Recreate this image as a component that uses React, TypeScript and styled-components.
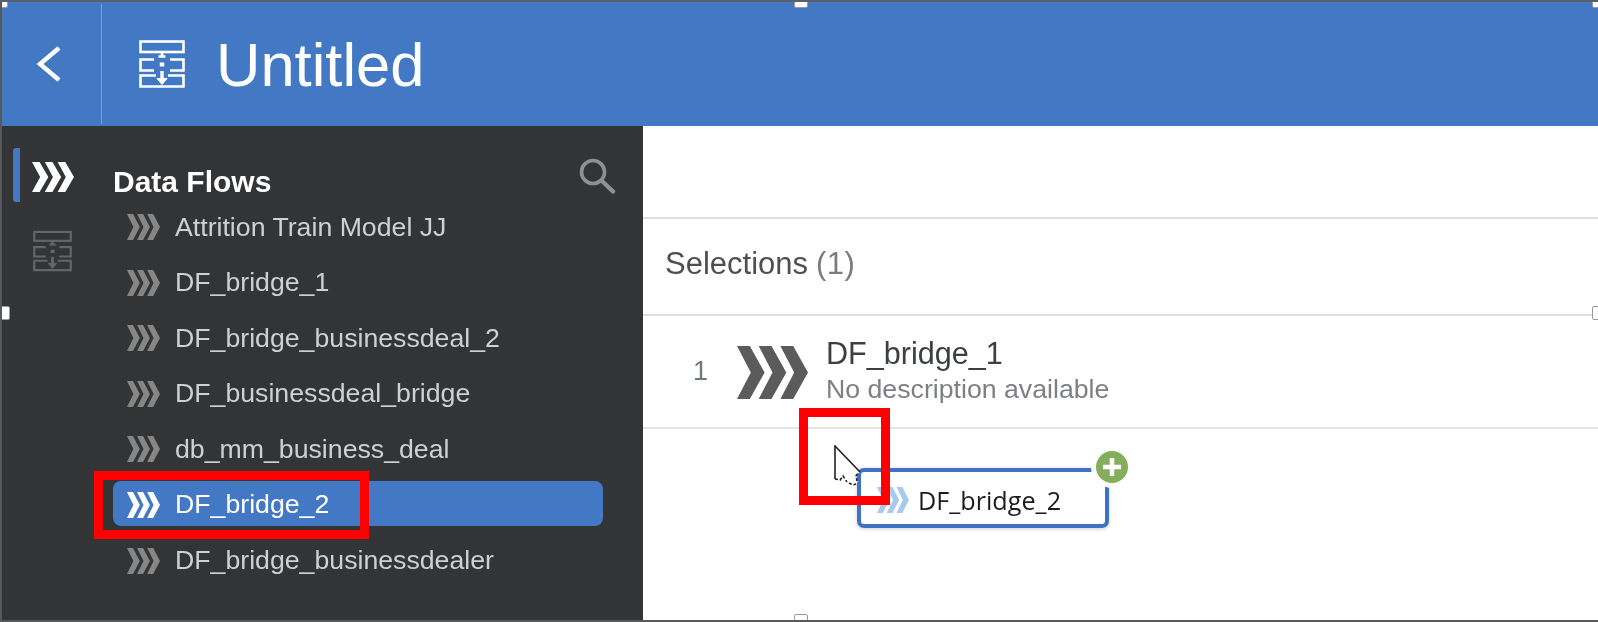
import React from 'react';
import styled, { createGlobalStyle } from 'styled-components';

const flows = [
  'Attrition Train Model JJ',
  'DF_bridge_1',
  'DF_bridge_businessdeal_2',
  'DF_businessdeal_bridge',
  'db_mm_business_deal',
  'DF_bridge_2',
  'DF_bridge_businessdealer',
];

const Chevrons: React.FC<{ className?: string }> = ({ className }) => (
  <svg className={className} viewBox="0 0 72 54" fill="currentColor" preserveAspectRatio="none">
    <polygon points="0,0 13,0 28,27 13,54 0,54 14,27" />
    <polygon points="22,0 35,0 50,27 35,54 22,54 36,27" />
    <polygon points="44,0 57,0 72,27 57,54 44,54 58,27" />
  </svg>
);

const TableIcon: React.FC<{ className?: string }> = ({ className }) => (
  <svg className={className} viewBox="0 0 46 48" fill="none" stroke="currentColor" strokeWidth="2.6">
    <rect x="1.5" y="1.5" width="43" height="10.5" />
    <path d="M23 12v5M19.5 16.5h7" />
    <path d="M15 19.5H1.5v11H15M31 19.5h13.5v11H31" />
    <path d="M23 22.5v4" strokeWidth="4.5" />
    <path d="M17 35.5H1.5v11h43v-11H29" />
    <path d="M23 31v11" strokeWidth="3.4" />
    <path d="M18 38.5l5 6 5-6z" fill="currentColor" strokeWidth="1" />
  </svg>
);

const App: React.FC = () => (
  <>
    <GlobalStyle />
    <Frame>
      <Header>
        <BackButton>
          <svg width="26" height="36" viewBox="0 0 26 36" fill="none" stroke="#fff" strokeWidth="4.4">
            <path d="M23 2 4 18l19 16" />
          </svg>
        </BackButton>
        <TitleArea>
          <HeaderIcon />
          <Title>Untitled</Title>
        </TitleArea>
      </Header>
      <Body>
        <Sidebar>
          <Rail>
            <RailTab $active>
              <RailChevrons />
            </RailTab>
            <RailTable />
          </Rail>
          <FlowPanel>
            <PanelHeader>
              <PanelTitle>Data Flows</PanelTitle>
              <SearchIcon width="38" height="38" viewBox="0 0 38 38" fill="none" stroke="#8d9094">
                <circle cx="15" cy="15" r="11.5" strokeWidth="3.6" />
                <path d="M24 24l11 10.5" strokeWidth="4.4" strokeLinecap="round" />
              </SearchIcon>
            </PanelHeader>
            <FlowList>
              {flows.map((name) => (
                <FlowRow key={name} $selected={name === 'DF_bridge_2'}>
                  <FlowIcon />
                  {name}
                </FlowRow>
              ))}
            </FlowList>
          </FlowPanel>
        </Sidebar>
        <Content>
          <TopSpace />
          <SelectionsBar>
            Selections <Count>(1)</Count>
          </SelectionsBar>
          <SelectionRow>
            <RowNumber>1</RowNumber>
            <RowIcon />
            <RowText>
              <RowName>DF_bridge_1</RowName>
              <RowDescription>No description available</RowDescription>
            </RowText>
          </SelectionRow>
        </Content>
      </Body>

      <DragCard>
        <CardIcon />
        DF_bridge_2
        <AddBadge>
          <svg width="20" height="20" viewBox="0 0 20 20" stroke="#fff" strokeWidth="4.5">
            <path d="M10 1v18M1 10h18" />
          </svg>
        </AddBadge>
      </DragCard>
      <Cursor width="30" height="42" viewBox="0 0 30 42" fill="none" stroke="#222" strokeWidth="1.6">
        <path d="M1 1 26 27 21 31 24 37 18 40 14 34 8 39 1 34z" fill="#fff" stroke="none" />
        <path d="M1 34V1l25 26" />
        <path d="M1 34l5 1 3-4 4 6M15 38l4 2 3-1M23 36l-1-5 2-3" strokeDasharray="3 2" />
      </Cursor>
      <Highlight $x={94} $y={471} $w={275} $h={68} />
      <Highlight $x={799} $y={408} $w={91} $h={97} />

      <Handle $x={792} $y={-8} />
      <Handle $x={792} $y={612} />
      <Handle $x={-6} $y={304} />
      <Handle $x={1590} $y={304} />
      <Handle $x={-8} $y={-8} />
      <Handle $x={1590} $y={-8} />
    </Frame>
  </>
);

const GlobalStyle = createGlobalStyle`
  html, body {
    margin: 0;
    padding: 0;
    background: #fff;
  }
  body {
    font-family: "Liberation Sans", Arial, sans-serif;
  }
`;

const Frame = styled.div`
  position: relative;
  display: flex;
  flex-direction: column;
  width: 1598px;
  height: 622px;
  box-sizing: border-box;
  overflow: hidden;
  border-top: 2px solid #5a6067;
  border-left: 2px solid #55585c;
  border-bottom: 2px solid #55585c;
  filter: blur(0.45px);
`;

const Header = styled.div`
  display: flex;
  flex: 0 0 124px;
  background: #4379c4;
  color: #fff;
`;

const BackButton = styled.div`
  display: flex;
  align-items: center;
  justify-content: center;
  width: 100px;
  padding-right: 6px;
  box-sizing: border-box;
  border-right: 1px solid #7ba2d9;
  margin: 2px 0;
`;

const TitleArea = styled.div`
  display: flex;
  align-items: center;
  gap: 31px;
  padding-left: 37px;
`;

const HeaderIcon = styled(TableIcon)`
  width: 46px;
  height: 48px;
  color: #fff;
`;

const Title = styled.h1`
  margin: 2px 0 0;
  font-size: 61.5px;
  font-weight: 400;
  line-height: 1;
`;

const Body = styled.div`
  display: flex;
  flex: 1;
  min-height: 0;
`;

const Sidebar = styled.div`
  display: flex;
  flex: 0 0 641px;
  background: #333436;
`;

const Rail = styled.div`
  display: flex;
  flex: 0 0 111px;
  flex-direction: column;
  padding-top: 22px;
  box-sizing: border-box;
`;

const RailTab = styled.div<{ $active?: boolean }>`
  display: flex;
  align-items: flex-start;
  height: 54px;
  margin-left: 11px;
  padding-left: 12px;
  padding-top: 14px;
  box-sizing: border-box;
  border-left: 7px solid ${(p) => (p.$active ? '#4379c4' : 'transparent')};
  border-radius: 3px;
`;

const RailChevrons = styled(Chevrons)`
  width: 42px;
  height: 30px;
  color: #fff;
`;

const RailTable = styled(TableIcon)`
  width: 39px;
  height: 42px;
  margin: 28px 0 0 31px;
  color: #646566;
`;

const FlowPanel = styled.div`
  display: flex;
  flex: 1;
  flex-direction: column;
  min-width: 0;
`;

const PanelHeader = styled.div`
  display: flex;
  align-items: center;
  justify-content: space-between;
  padding: 29px 27px 0 0;
  height: 44px;
`;

const PanelTitle = styled.div`
  font-size: 30px;
  font-weight: 700;
  color: #fff;
  padding-top: 9px;
`;

const SearchIcon = styled.svg`
  flex: none;
  margin-top: -2px;
`;

const FlowList = styled.div`
  display: flex;
  flex-direction: column;
  margin-top: 4px;
  margin-right: 40px;
`;

const FlowRow = styled.div<{ $selected?: boolean }>`
  display: flex;
  align-items: center;
  gap: 15px;
  height: 45px;
  box-sizing: border-box;
  padding: 3px 0 0 14px;
  margin-bottom: 10.6px;
  border-radius: 8px;
  font-size: 26.7px;
  white-space: nowrap;
  color: ${(p) => (p.$selected ? '#fff' : '#cfd0d0')};
  background: ${(p) => (p.$selected ? '#4379c4' : 'transparent')};

  svg {
    color: ${(p) => (p.$selected ? '#fff' : '#868686')};
  }
`;

const FlowIcon = styled(Chevrons)`
  flex: none;
  width: 33px;
  height: 26px;
`;

const Content = styled.div`
  display: flex;
  flex: 1;
  flex-direction: column;
  background: #fff;
`;

const TopSpace = styled.div`
  height: 91px;
  border-bottom: 2px solid #e0e0e0;
`;

const SelectionsBar = styled.div`
  display: flex;
  align-items: center;
  gap: 8px;
  height: 90px;
  padding: 0 0 5px 22px;
  border-bottom: 2px solid #e0e0e0;
  font-size: 31px;
  color: #4d4f52;
`;

const Count = styled.span`
  color: #7a7c80;
  letter-spacing: 0.5px;
`;

const SelectionRow = styled.div`
  display: flex;
  align-items: center;
  height: 111px;
  padding-left: 50px;
  border-bottom: 2px solid #e4e4e4;
`;

const RowNumber = styled.div`
  width: 44px;
  font-size: 27px;
  color: #6f7880;
`;

const RowIcon = styled(Chevrons)`
  width: 71px;
  height: 53px;
  margin-top: 1px;
  color: #5b5b5b;
`;

const RowText = styled.div`
  display: flex;
  flex-direction: column;
  margin: -2px 0 0 18px;
`;

const RowName = styled.div`
  font-size: 30.6px;
  line-height: 34px;
  color: #3c4043;
`;

const RowDescription = styled.div`
  margin-top: 3px;
  font-size: 26.7px;
  line-height: 33px;
  color: #7d7f83;
`;

const DragCard = styled.div`
  position: absolute;
  left: 855px;
  top: 466px;
  display: flex;
  align-items: center;
  gap: 9px;
  width: 252px;
  height: 60px;
  box-sizing: border-box;
  padding: 4px 0 0 16px;
  border: 4px solid #3f72c6;
  border-radius: 7px;
  background: #fff;
  box-shadow: 0 1px 4px rgba(0, 0, 0, 0.2);
  font-family: "Open Sans", sans-serif;
  font-size: 25.2px;
  color: #1c1c1c;
`;

const CardIcon = styled(Chevrons)`
  width: 32px;
  height: 26px;
  color: #a9c8ee;
`;

const AddBadge = styled.div`
  position: absolute;
  right: -28px;
  top: -26px;
  display: flex;
  align-items: center;
  justify-content: center;
  width: 32px;
  height: 32px;
  border: 5px solid #fff;
  border-radius: 50%;
  background: #84ad5c;
`;

const Cursor = styled.svg`
  position: absolute;
  left: 832px;
  top: 443px;
`;

const Highlight = styled.div<{ $x: number; $y: number; $w: number; $h: number }>`
  position: absolute;
  left: ${(p) => p.$x - 2}px;
  top: ${(p) => p.$y - 2}px;
  width: ${(p) => p.$w}px;
  height: ${(p) => p.$h}px;
  box-sizing: border-box;
  border: 9px solid #fe0000;
  pointer-events: none;
`;

const Handle = styled.div<{ $x: number; $y: number }>`
  position: absolute;
  left: ${(p) => p.$x}px;
  top: ${(p) => p.$y}px;
  width: 14px;
  height: 14px;
  box-sizing: border-box;
  border: 1px solid #9a9a9a;
  border-radius: 2px;
  background: #fff;
`;

export default App;
